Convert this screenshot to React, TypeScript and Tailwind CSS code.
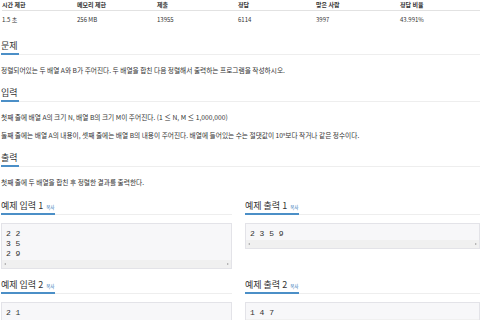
import React from "react";

const font = "font-['Noto_Sans_CJK_KR','Noto_Sans',sans-serif]";

function Heading({ children, copy }: { children: React.ReactNode; copy?: boolean }) {
  return (
    <div className="flex border-b border-[#eeeeee]">
      <h2 className="-mb-[1px] flex items-baseline border-b-2 border-[#4b8fc7] pb-[2px] pr-[1px] text-[9px] font-normal leading-[11px] text-[#333]">
        {children}
        {copy && <span className="ml-[3px] text-[4.5px] leading-[5px] text-[#2a72b5]">복사</span>}
      </h2>
    </div>
  );
}

function Scroll() {
  return (
    <div className="flex h-[8px] items-center justify-between bg-[#f0f0f0] px-[2px]">
      <span className="h-0 w-0 border-y-[1.5px] border-r-[2px] border-y-transparent border-r-[#a3a3a3]" />
      <span className="h-0 w-0 border-y-[1.5px] border-l-[2px] border-y-transparent border-l-[#a3a3a3]" />
    </div>
  );
}

function Code({ lines }: { lines: string[] }) {
  return (
    <div className="mt-[8px] border border-[#e3e3e8] bg-[#f7f7f9]">
      <pre className="px-[4px] pt-[5px] pb-[1px] font-['Liberation_Mono',monospace] text-[8px] leading-[10px] text-[#333]">
        {lines.join("\n")}
      </pre>
      <Scroll />
    </div>
  );
}

export default function App() {
  const head = ["시간 제한", "메모리 제한", "제출", "정답", "맞은 사람", "정답 비율"];
  const vals = ["1.5 초", "256 MB", "13955", "6114", "3997", "43.991%"];
  const p = "text-[6.7px] leading-[9px]";
  return (
    <div className={`${font} h-[320px] w-[480px] overflow-hidden bg-white pl-[1px] text-[#333]`}>
      <div className="grid grid-cols-[75px_80px_81px_78px_84px_1fr] pl-[1px] text-[6px]">
        {head.map((h) => (
          <div key={h} className="h-[11px] border-b border-[#e2e2e2] pt-[1px] font-bold leading-[7px]">
            {h}
          </div>
        ))}
        {vals.map((v) => (
          <div key={v} className="h-[17px] pt-[5px] leading-[7px]">
            {v}
          </div>
        ))}
      </div>

      <div className="mt-[12px]">
        <Heading>문제</Heading>
        <p className={`mt-[11px] ${p}`}>
          정렬되어있는 두 배열 A와 B가 주어진다. 두 배열을 합친 다음 정렬해서 출력하는 프로그램을 작성하시오.
        </p>
      </div>

      <div className="mt-[12px]">
        <Heading>입력</Heading>
        <p className={`mt-[11px] ${p}`}>
          첫째 줄에 배열 A의 크기 N, 배열 B의 크기 M이 주어진다. (1 ≤ N, M ≤ 1,000,000)
        </p>
        <p className={`mt-[9px] ${p}`}>
          둘째 줄에는 배열 A의 내용이, 셋째 줄에는 배열 B의 내용이 주어진다. 배열에 들어있는 수는 절댓값이 10
          <span className="relative -top-[2px] text-[4px] leading-none">9</span>보다 작거나 같은 정수이다.
        </p>
      </div>

      <div className="mt-[12px]">
        <Heading>출력</Heading>
        <p className={`mt-[11px] ${p}`}>첫째 줄에 두 배열을 합친 후 정렬한 결과를 출력한다.</p>
      </div>

      <div className="mt-[13px] grid grid-cols-[231px_1fr] gap-x-[13px]">
        <div>
          <Heading copy>예제 입력 1</Heading>
          <Code lines={["2 2", "3 5", "2 9"]} />
        </div>
        <div>
          <Heading copy>예제 출력 1</Heading>
          <Code lines={["2 3 5 9"]} />
        </div>
        <div className="mt-[10px]">
          <Heading copy>예제 입력 2</Heading>
          <Code lines={["2 1", "4 7", "1"]} />
        </div>
        <div className="mt-[10px]">
          <Heading copy>예제 출력 2</Heading>
          <Code lines={["1 4 7"]} />
        </div>
      </div>
    </div>
  );
}
